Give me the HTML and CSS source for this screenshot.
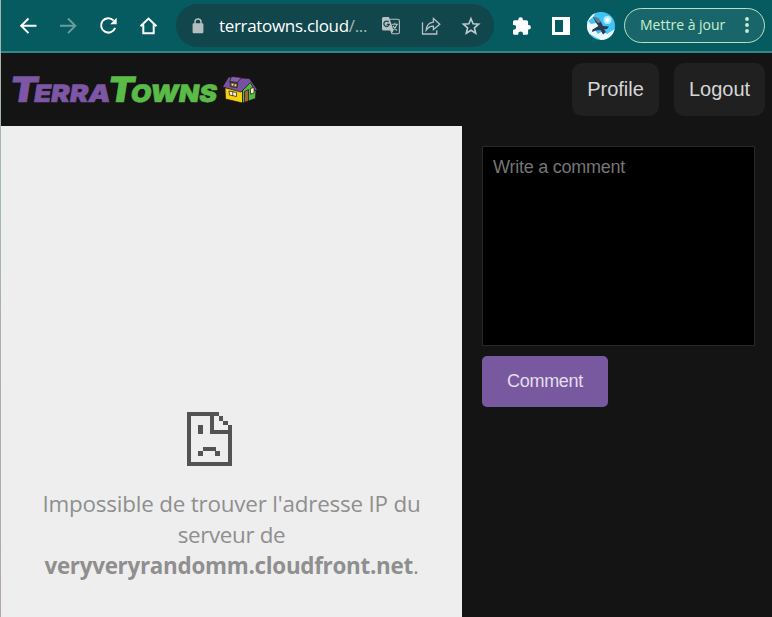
FILE: index.html
```html
<!DOCTYPE html>
<html lang="fr">
<head>
<meta charset="utf-8">
<title>TerraTowns</title>
<link rel="stylesheet" href="styles.css">
</head>
<body>
<div class="window">
  <header class="toolbar">
    <nav class="nav">
      <svg width="20" height="20" viewBox="0 0 20 20"><path d="M17.5 9.8H2.5M9.5 2.5L2.2 9.8L9.5 17.1"/></svg>
      <svg class="dim" width="20" height="20" viewBox="0 0 20 20"><path d="M1 9.8H16M9 2.5L16.3 9.8L9 17.1"/></svg>
      <svg width="20" height="20" viewBox="0 0 20 20"><path d="M14.6 4.5A7.2 7.2 0 1 0 16.1 11.8"/><path class="solid" d="M17.7 1.8V8.2H11.2Z"/></svg>
      <svg width="20" height="20" viewBox="0 0 20 20"><path d="M1.5 10.2L9.5 2.6L17.5 10.2M4.3 8.5V17.2H14.7V8.5"/></svg>
    </nav>
    <div class="omnibox">
      <svg class="lock" width="12" height="16" viewBox="0 0 12 16"><rect x=".6" y="5.2" width="10.8" height="10" rx="1.2" fill="#b4bec2"/><path d="M3 6V4a3 3 0 0 1 6 0V6" fill="none" stroke="#b4bec2" stroke-width="1.5"/></svg>
      <span class="url">terratowns.cloud<span class="path">/...</span></span>
      <svg class="tool" width="20" height="20" viewBox="0 0 20 20"><path d="M9 3.3H16.8Q18.4 3.3 18.4 5V16.2Q18.4 17.8 16.8 17.8H10.6" fill="none" stroke="#b9c0c2" stroke-width="1.1"/><path d="M2.6 1H8L12.6 14.6L10.5 18L9.2 14.6H2.6Q1 14.6 1 13V2.6Q1 1 2.6 1Z" fill="#b9c0c2"/><path d="M7.6 6A2.7 2.7 0 1 0 8.2 8.4H5.8" fill="none" stroke="#10464c" stroke-width="1.3"/><path d="M10.8 8.2H17M13.8 6.8V8.2M15.8 8.5Q15 11.8 11.9 13.8M12 9.8Q13.2 12.5 16 14.5" fill="none" stroke="#b9c0c2" stroke-width="1.1"/></svg>
      <svg class="tool" width="20" height="20" viewBox="0 0 20 20"><path d="M1.5 6.2V18H15.8V14.2M5.2 14.2C5.6 9.2 8.4 6.4 12.4 6.1V2.5L18.8 8.2L12.4 13.5V10.1C9.4 10 7.1 11.4 5.2 14.2Z" fill="none" stroke="#b9c0c2" stroke-width="1.3"/></svg>
      <svg class="tool" width="20" height="20" viewBox="0 0 20 20"><path d="M10 2.7L12.1 7.8L17.6 8.2L13.4 11.8L14.7 17.2L10 14.3L5.3 17.2L6.6 11.8L2.4 8.2L7.9 7.8Z" fill="none" stroke="#c1cacc" stroke-width="1.6"/></svg>
    </div>
    <svg class="puzzle" width="20" height="20" viewBox="0 0 20 20"><path d="M2.6 4.2H6.3V3.5A2.3 2.3 0 0 1 10.9 3.5V4.2H14.5A1.6 1.6 0 0 1 16.1 5.8V9H16.6A2.3 2.3 0 0 1 16.6 13.6H16.1V17.2A1.6 1.6 0 0 1 14.5 18.8H11V18A2.4 2.4 0 0 0 6.2 18V18.8H2.6A1.6 1.6 0 0 1 1 17.2V13.7H1.8A2.4 2.4 0 0 0 1.8 8.9H1V5.8A1.6 1.6 0 0 1 2.6 4.2Z" fill="#fff"/></svg>
    <svg class="panel" width="18" height="18" viewBox="0 0 18 18"><path d="M0 0H18V18H0ZM3 3V15H11V3Z" fill="#fff" fill-rule="evenodd"/></svg>
    <svg class="avatar" width="28" height="28" viewBox="0 0 28 28"><defs><clipPath id="disc"><circle cx="14" cy="14" r="14"/></clipPath></defs><g clip-path="url(#disc)"><path d="M0 0H28V28H0Z" fill="#41c4f4"/><path d="M0 8L4 12L9 11L12 15L8 18L11 22L16 19L20 22L28 17V28H14L8 25L3 22L0 22Z" fill="#eefaff"/><path d="M0 0H9L6 5L0 10Z" fill="#eefaff"/><circle cx="20.5" cy="8" r="4" fill="#aeeeff"/><circle cx="20.5" cy="8" r="2" fill="#fff"/><path d="M6 5L11 6L14 10L16 14L22 14.5L20 17L17 17.5L19 20L16 22.5L13.5 18L9 18.5L5 20L5.5 17.5L11.5 14L8 9Z" fill="#293a51"/><path d="M6 5L11 6L14 10L11 11Z" fill="#65809b"/></g></svg>
    <div class="update"><span>Mettre à jour</span><svg width="6" height="18" viewBox="0 0 6 18"><g fill="#c9efcf"><circle cx="3" cy="3" r="1.9"/><circle cx="3" cy="9" r="1.9"/><circle cx="3" cy="15" r="1.9"/></g></svg></div>
  </header>

  <div class="sitebar">
    <svg class="logo" width="260" height="40" viewBox="-10 0 260 40">
      <g class="word" transform="translate(0 32) skewX(-9)">
        <text class="violet" x="-2.5" y="0" textLength="101" lengthAdjust="spacingAndGlyphs"><tspan class="big">T</tspan><tspan class="small" dx="-3">ERRA</tspan></text>
        <text class="green" x="95.5" y="0" textLength="109.5" lengthAdjust="spacingAndGlyphs"><tspan class="big">T</tspan><tspan class="small" dx="-3">OWNS</tspan></text>
      </g>
      <g transform="translate(211.5 5.5)" stroke="#17140f" stroke-width=".7" stroke-linejoin="round">
        <path d="M2.5 12L20 14V27.5L3 23.5Z" fill="#f7cf0c"/>
        <path d="M20 15L28 5L33.5 14L33 23L20 27.5Z" fill="#54b944"/>
        <path d="M6 1.5L27 3L35 14.5L32 15L28 7L18.5 16.5L0 11.5Z" fill="#7951a2"/>
        <path d="M9 1L19 2L15 7L7 6Z" fill="#865fae"/>
        <path d="M7.5 6.5L15.5 8L14.5 12L8 11Z" fill="#8b6e21"/>
        <path d="M9 8L11 8.3V10.5L9 10ZM12 8.5L14 9L13.5 11L12 10.8Z" fill="#fff4cb" stroke-width=".3"/>
        <path d="M6.5 15.5L14 17V21L7 19.5Z" fill="#fff2ce"/><path d="M10.3 16.2V20.3"/>
        <path d="M22 16L26 14V25.5L22 26.7Z" fill="#a9613c"/>
        <path d="M28 13L31.5 12V17.5L28 18.5Z" fill="#fff2ce"/>
      </g>
    </svg>
    <nav class="account"><a class="pill profile">Profile</a><a class="pill logout">Logout</a></nav>
  </div>

  <main class="content">
    <section class="frame">
      <svg class="sad" width="46" height="55" viewBox="0 0 46 55" shape-rendering="crispEdges"><path fill="#535353" d="M0 0H32V4H36V9H41V13H45V54H0ZM4 4V50H41V22H23V4ZM27 4V18H41V13H36V9H32V4ZM11 13H16V22H11ZM16 35H29V39H33V44H28V39H16V44H11V39H16Z" fill-rule="evenodd"/></svg>
      <p class="error"><span class="l1">Impossible de trouver l'adresse IP du</span><br><span class="l2">serveur de</span><br><span class="l3"><b>veryveryrandomm.cloudfront.net</b>.</span></p>
    </section>
    <form class="comment">
      <textarea placeholder="Write a comment"></textarea>
      <button type="button">Comment</button>
    </form>
  </main>
</div>
</body>
</html>
```
FILE: styles.css
```css
* { box-sizing: border-box; }
body { margin: 0; background: #141414; }
.window {
  height: 617px;
  overflow: hidden;
  padding-left: 1px;
  background: linear-gradient(#a9b3ae, #a3b8ae 200px, #aab0b0 350px, #b5a7a4) 0 0 / 1px 100% no-repeat;
  display: flex;
  flex-direction: column;
}
.toolbar {
  height: 53px;
  flex: none;
  display: flex;
  align-items: center;
  background: #055b60;
  border-bottom: 2px solid #35868a;
  font-family: "Open Sans", sans-serif;
}
.toolbar svg { display: block; flex: none; }
.nav { display: flex; gap: 20px; margin-left: 18px; }
.nav path { fill: none; stroke: #fff; stroke-width: 2; }
.nav .solid { fill: #fff; stroke: none; }
.nav .dim { opacity: .4; }
.omnibox {
  width: 318px;
  height: 43px;
  flex: none;
  margin-left: 17px;
  border-radius: 22px;
  background: #10464c;
  display: flex;
  align-items: center;
}
.lock { margin-left: 16px; }
.url { width: 162px; margin-left: 15px; color: #fff; font-size: 17px; letter-spacing: -.32px; white-space: nowrap; }
.path { color: #a6b7b9; }
.tool + .tool { margin-left: 20px; }
.puzzle { margin-left: 18px; }
.panel { margin-left: 20px; }
.avatar { margin-left: 17px; }
.update {
  width: 141px;
  height: 35px;
  flex: none;
  margin-left: 9px;
  border: 1px solid #b5e2c4;
  border-radius: 18px;
  background: #18666a;
  color: #c9efcf;
  font-size: 14px;
  line-height: 20px;
  display: flex;
  align-items: center;
  justify-content: space-between;
  padding: 0 14px 2px 15px;
}
.sitebar {
  height: 73px;
  flex: none;
  display: flex;
  align-items: flex-start;
  justify-content: space-between;
}
.logo { margin-top: 17px; }
.word { font-family: Inter, sans-serif; font-weight: 900; }
.big { font-size: 35px; }
.small { font-size: 24px; }
.violet { fill: #7e56a6; stroke: #7e56a6; }
.green { fill: #5bbb48; stroke: #5bbb48; }
.violet, .green { stroke-width: .6px; }
.account { display: flex; gap: 15px; margin: 10px 7px 0 0; }
.pill {
  height: 53px;
  border-radius: 10px;
  background: #202020;
  color: #d6d6d6;
  font: 20px/52px "Liberation Sans", sans-serif;
  text-align: center;
}
.profile { width: 87px; }
.logout { width: 91px; }
.content { flex: 1; display: flex; }
.frame {
  width: 461px;
  flex: none;
  background: #eee;
  display: flex;
  flex-direction: column;
  align-items: center;
  padding-top: 286px;
}
.sad { margin-right: 43px; }
.error {
  margin: 21px 0 0;
  color: #8f8f8f;
  font: 22.4px/31px "Open Sans", sans-serif;
  text-align: center;
  white-space: nowrap;
}
.l1 { letter-spacing: -.19px; }
.l2 { letter-spacing: -.35px; }
.l3 { letter-spacing: -.28px; }
.comment { padding: 20px; display: flex; flex-direction: column; align-items: flex-start; gap: 10px; }
.comment textarea {
  width: 273px;
  height: 200px;
  resize: none;
  border: 1px solid #282828;
  border-radius: 0;
  background: #000;
  padding: 10px;
  font: 18px/20px "Liberation Sans", sans-serif;
  letter-spacing: -.25px;
}
.comment textarea::placeholder { color: #757575; }
.comment button {
  width: 126px;
  height: 51px;
  border: 0;
  border-radius: 5px;
  background: #78589f;
  color: #e4deec;
  font: 18px/20px "Liberation Sans", sans-serif;
  letter-spacing: -.3px;
  padding: 0 0 2px;
}
```
